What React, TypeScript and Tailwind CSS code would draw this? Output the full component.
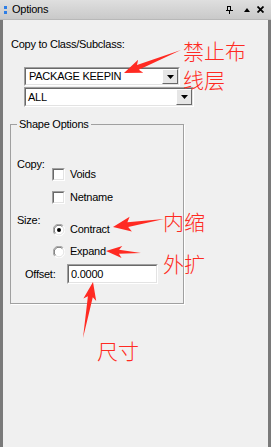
import React from "react";

function arrowPts(x1: number, y1: number, x2: number, y2: number, headLen = 14, headW = 13, shaftW = 5) {
  const dx = x2 - x1;
  const dy = y2 - y1;
  const L = Math.sqrt(dx * dx + dy * dy);
  const ux = dx / L;
  const uy = dy / L;
  const nx = -uy;
  const ny = ux;
  const bx = x1 + ux * (L - headLen);
  const by = y1 + uy * (L - headLen);
  const wx = x1 + ux * (L - headLen - 3);
  const wy = y1 + uy * (L - headLen - 3);
  const p = (x: number, y: number) => `${x.toFixed(1)},${y.toFixed(1)}`;
  return [
    p(x1, y1),
    p(bx + (nx * shaftW) / 2, by + (ny * shaftW) / 2),
    p(wx + (nx * headW) / 2, wy + (ny * headW) / 2),
    p(x2, y2),
    p(wx - (nx * headW) / 2, wy - (ny * headW) / 2),
    p(bx - (nx * shaftW) / 2, by - (ny * shaftW) / 2),
  ].join(" ");
}

function Sunken({ className, children }: { className: string; children?: React.ReactNode }) {
  return (
    <div className={`border-t border-l border-t-[#a0a0a0] border-l-[#a0a0a0] border-b border-r border-b-white border-r-white ${className}`}>
      <div className="h-full w-full border-t border-l border-t-[#696969] border-l-[#696969] border-b border-r border-b-[#e3e3e3] border-r-[#e3e3e3] bg-white flex items-center">
        {children}
      </div>
    </div>
  );
}

function DropBtn() {
  return (
    <div className="h-full w-[16px] border-t border-l border-t-white border-l-white border-b border-r border-b-[#696969] border-r-[#696969] bg-[#e6e6e6] flex items-center justify-center">
      <svg width="7" height="4" viewBox="0 0 7 4">
        <polygon points="0,0 7,0 3.5,4" fill="#000" />
      </svg>
    </div>
  );
}

function Check() {
  return <Sunken className="w-[13px] h-[13px] shrink-0" />;
}

function Radio({ on }: { on?: boolean }) {
  return (
    <svg width="12" height="12" viewBox="0 0 12 12" className="shrink-0">
      <circle cx="6" cy="6" r="5.5" fill="#fff" />
      <path d="M10.2 1.8 A5.5 5.5 0 0 0 1.8 10.2" fill="none" stroke="#a0a0a0" strokeWidth="1" />
      <path d="M9.4 2.6 A4.5 4.5 0 0 0 2.6 9.4" fill="none" stroke="#696969" strokeWidth="1" />
      <path d="M1.8 10.2 A5.5 5.5 0 0 0 10.2 1.8" fill="none" stroke="#ffffff" strokeWidth="1" />
      <path d="M2.6 9.4 A4.5 4.5 0 0 0 9.4 2.6" fill="none" stroke="#e3e3e3" strokeWidth="1" />
      {on && <circle cx="6" cy="6" r="2" fill="#000" />}
    </svg>
  );
}

export default function App() {
  const red = "#ff2a22";
  return (
    <div className="relative w-[271px] h-[447px] overflow-hidden bg-[#f0f0f0] flex flex-col font-['Liberation_Sans',Arial,sans-serif] text-[11px] leading-[13px] tracking-[-0.25px] text-black">
      {/* Title bar */}
      <div className="h-[20px] shrink-0 flex items-center bg-gradient-to-b from-[#dfdfdf] to-[#c9c9c9] border-b border-b-[#b8b8b8]">
        <div className="ml-[4px] flex flex-col gap-[2px]">
          <div className="w-[3px] h-[3px] bg-[#2d7ee6]" />
          <div className="w-[3px] h-[3px] bg-[#2d7ee6]" />
        </div>
        <span className="ml-[5px]">Options</span>
        <div className="ml-auto flex items-center mr-[7px]">
          <svg width="7" height="8" viewBox="0 0 7 8" className="mr-[11px]">
            <rect x="1.5" y="0.5" width="3" height="4" fill="none" stroke="#000" />
            <rect x="0" y="4" width="7" height="1" fill="#000" />
            <rect x="3" y="5" width="1" height="3" fill="#000" />
          </svg>
          <svg width="6" height="4" viewBox="0 0 6 4" className="mr-[7px]">
            <polygon points="3,0 6,4 0,4" fill="#000" />
          </svg>
          <svg width="7" height="7" viewBox="0 0 7 7">
            <path d="M0.5 0.5 L6.5 6.5 M6.5 0.5 L0.5 6.5" stroke="#000" strokeWidth="1.8" />
          </svg>
        </div>
      </div>

      {/* Body */}
      <div className="flex-1 border-l-[3px] border-l-[#7a7a7a] border-r-[3px] border-r-[#7a7a7a] pl-[7px] pt-[18px] flex flex-col items-start">
        <div className="ml-[1px]">Copy to Class/Subclass:</div>

        <Sunken className="ml-[14px] mt-[16px] w-[156px] h-[19px]">
          <span className="ml-[3px] flex-1">PACKAGE KEEPIN</span>
          <DropBtn />
        </Sunken>
        <Sunken className="ml-[14px] mt-[1px] w-[170px] h-[20px]">
          <span className="ml-[2px] flex-1">ALL</span>
          <DropBtn />
        </Sunken>

        {/* Group box */}
        <div className="relative mt-[17px] w-[174px] border border-[#a0a0a0] shadow-[1px_1px_0_#ffffff] pb-[19px] flex flex-col">
          <div className="absolute -top-[7px] left-[6px] px-[2px] bg-[#f0f0f0]">Shape Options</div>

          <div className="mt-[33px] pl-[6px] flex">
            <div className="w-[35px]">Copy:</div>
            <div className="flex flex-col mt-[10px] gap-[10px]">
              <div className="h-[13px] flex items-center">
                <Check />
                <span className="ml-[5px]">Voids</span>
              </div>
              <div className="h-[13px] flex items-center">
                <Check />
                <span className="ml-[5px]">Netname</span>
              </div>
            </div>
          </div>

          <div className="mt-[10px] pl-[6px] flex">
            <div className="w-[36px]">Size:</div>
            <div className="flex flex-col mt-[9px] gap-[9px]">
              <div className="h-[13px] flex items-center">
                <Radio on />
                <span className="ml-[5px]">Contract</span>
              </div>
              <div className="h-[13px] flex items-center">
                <Radio />
                <span className="ml-[5px]">Expand</span>
              </div>
            </div>
          </div>

          <div className="mt-[6px] pl-[14px] flex items-center">
            <div className="w-[42px]">Offset:</div>
            <Sunken className="w-[91px] h-[20px]">
              <span className="ml-[2px]">0.0000</span>
            </Sunken>
          </div>
        </div>
      </div>

      {/* Annotations */}
      <svg className="absolute left-0 top-0 pointer-events-none" width="271" height="447" viewBox="0 0 271 447">
        <polygon points={arrowPts(181, 50, 124, 73, 15, 14, 5)} fill={red} />
        <polygon points={arrowPts(164, 219, 113, 227, 15, 15, 5)} fill={red} />
        <polygon points={arrowPts(141, 253, 106, 251, 13, 12, 4)} fill={red} />
        <polygon points={arrowPts(83, 338, 93, 282, 15, 13, 5)} fill={red} />
      </svg>
      <div className="absolute left-[183px] top-[36px] font-['Noto_Sans_CJK_SC',sans-serif] text-[21px] leading-[29px] font-light tracking-normal text-[#ff2a22]">
        <div>禁止布</div>
        <div>线层</div>
      </div>
      <div className="absolute left-[163px] top-[211px] font-['Noto_Sans_CJK_SC',sans-serif] text-[21px] leading-[21px] font-light tracking-normal text-[#ff2a22]">内缩</div>
      <div className="absolute left-[163px] top-[253px] font-['Noto_Sans_CJK_SC',sans-serif] text-[21px] leading-[21px] font-light tracking-normal text-[#ff2a22]">外扩</div>
      <div className="absolute left-[97px] top-[340px] font-['Noto_Sans_CJK_SC',sans-serif] text-[21px] leading-[21px] font-light tracking-normal text-[#ff2a22]">尺寸</div>
    </div>
  );
}
